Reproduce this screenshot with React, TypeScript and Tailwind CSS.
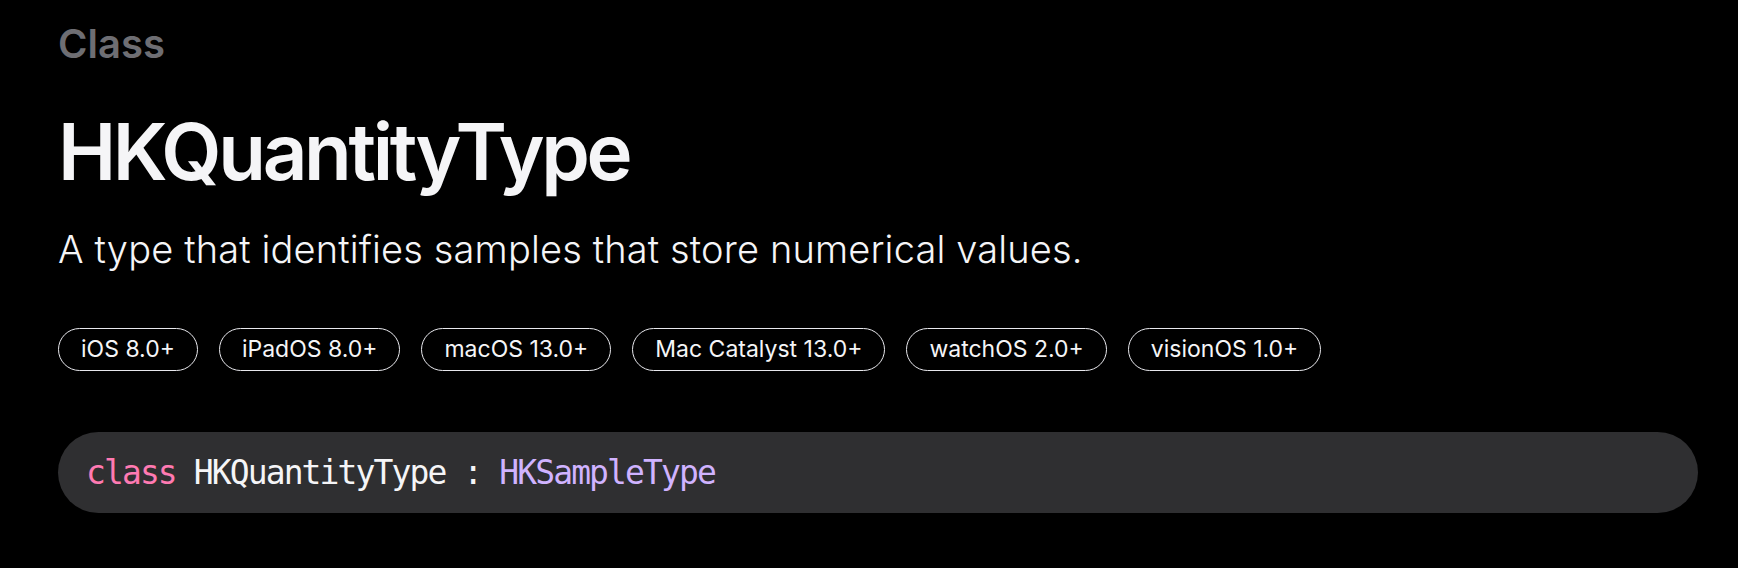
const platforms = [
  "iOS 8.0+",
  "iPadOS 8.0+",
  "macOS 13.0+",
  "Mac Catalyst 13.0+",
  "watchOS 2.0+",
  "visionOS 1.0+",
];

export default function App() {
  return (
    <div className="min-h-[568px] w-full bg-black font-['Inter','Liberation_Sans',sans-serif] text-[#f5f5f7]">
      <div className="pl-[58px] pt-[20px]">
        {/* Eyebrow */}
        <p className="text-[40px] leading-[48px] font-semibold text-[#6e6e73]">Class</p>

        {/* Title */}
        <h1 className="mt-[37px] text-[78px] leading-[94px] font-semibold tracking-[-0.043em] text-[#f5f5f7]">
          HKQuantityType
        </h1>

        {/* Abstract */}
        <p className="mt-[27px] text-[38px] leading-[46px] font-light tracking-[0.15px] text-[#f5f5f7]">
          A type that identifies samples that store numerical values.
        </p>

        {/* Availability */}
        <ul className="mt-[56px] flex gap-[21px]">
          {platforms.map((p) => (
            <li
              key={p}
              className="flex h-[43px] items-center rounded-full border-[1.5px] border-[#e8e8ed] px-[22px] text-[23px] text-[#f5f5f7]"
            >
              {p}
            </li>
          ))}
        </ul>

        {/* Declaration */}
        <div className="mt-[61px] flex h-[81px] w-[1640px] items-center rounded-full bg-[#2f2f31] pl-[28px]">
          <code className="font-['DejaVu_Sans_Mono','Liberation_Mono',monospace] text-[33px] tracking-[-1.9px] whitespace-pre">
            <span className="text-[#ff7ab2]">class</span>
            <span className="text-[#f5f5f7]"> HKQuantityType : </span>
            <span className="text-[#d0b3ff]">HKSampleType</span>
          </code>
        </div>
      </div>
    </div>
  );
}
